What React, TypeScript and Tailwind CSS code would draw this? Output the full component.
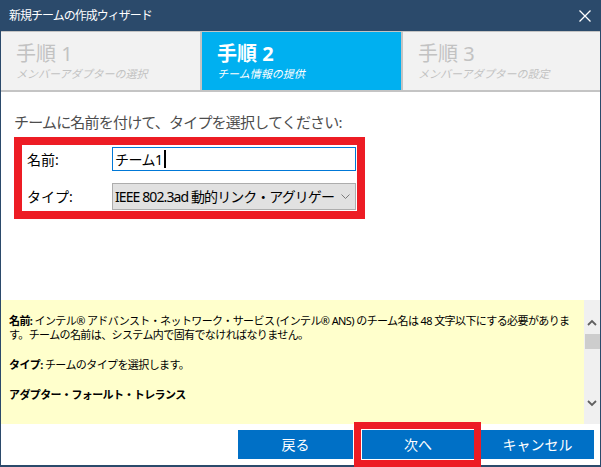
import React from 'react';

const font = { fontFamily: '"Noto Sans", "Noto Sans CJK JP", sans-serif' };

function Step({ num, label, active }: { num: number; label: string; active?: boolean }) {
  return (
    <div
      className={
        active
          ? 'flex flex-col bg-[#00b0f0] pl-[15px] pt-[9px] text-white'
          : 'flex flex-col bg-[#f2f2f2] pl-[15px] pt-[9px] text-[#c2c2c2]'
      }
    >
      <div className={active ? 'text-[20px] leading-[26px] font-bold' : 'text-[20px] leading-[26px]'}>
        手順 {num}
      </div>
      <div className="text-[11px] leading-[14px] italic whitespace-nowrap">{label}</div>
    </div>
  );
}

function Chevron({ up }: { up?: boolean }) {
  return (
    <svg width="10" height="7" viewBox="0 0 10 7" className="block">
      <path
        d={up ? 'M1 6 L5 2 L9 6' : 'M1 1 L5 5 L9 1'}
        fill="none"
        stroke="#606060"
        strokeWidth="1.8"
      />
    </svg>
  );
}

export default function App() {
  return (
    <div
      style={font}
      className="relative flex h-[467px] w-[601px] flex-col border-x border-b-2 border-[#2b4a6b] bg-white"
    >
      {/* title bar */}
      <div className="-mx-px flex h-[31px] shrink-0 items-center justify-between bg-[#2b4a6b] pl-[9px] pr-[10px] text-white">
        <span className="text-[12px] tracking-[-1px]">新規チームの作成ウィザード</span>
        <svg width="12" height="12" viewBox="0 0 12 12">
          <path d="M0.5 0.5 L11.5 11.5 M11.5 0.5 L0.5 11.5" stroke="#ffffff" strokeWidth="1.3" />
        </svg>
      </div>

      {/* steps */}
      <div className="grid h-[61px] shrink-0 grid-cols-[199px_199px_1fr] gap-x-[2px] border-t border-b-2 border-[#c4c4c4] bg-[#c4c4c4]">
        <Step num={1} label="メンバーアダプターの選択" />
        <Step num={2} label="チーム情報の提供" active />
        <Step num={3} label="メンバーアダプターの設定" />
      </div>

      {/* form */}
      <div className="flex flex-1 flex-col px-[13px]">
        <div className="mt-[19px] text-[15px] leading-[22px] tracking-[-0.8px] text-[#4d4d4d] whitespace-nowrap">
          チームに名前を付けて、タイプを選択してください:
        </div>
        <div className="mt-[4px] w-[351px] border-[8px] border-[#ed1c24] pt-[2px] pb-[1px] pr-[1px]">
          <div className="flex items-center">
            <div className="w-[90px] shrink-0 pl-[5px] text-[14px] text-black">名前:</div>
            <div className="flex h-[24px] min-w-0 flex-1 items-center border border-[#0078d7] px-[2px] text-[14px] text-black">
              <span className="tracking-[-0.5px]">チーム1</span>
              <span className="ml-px h-[18px] w-[2px] bg-black" />
            </div>
          </div>
          <div className="mt-[12px] flex items-center">
            <div className="w-[90px] shrink-0 pl-[5px] text-[14px] text-black">タイプ:</div>
            <div className="flex h-[27px] min-w-0 flex-1 items-center overflow-hidden border border-[#adadad] bg-[#e1e1e1] pl-[2px] pr-[5px] text-[14px] text-black">
              <span className="min-w-0 flex-1 whitespace-nowrap tracking-[-0.9px]">
                IEEE 802.3ad 動的リンク・アグリゲー
              </span>
              <svg width="9" height="6" viewBox="0 0 9 6" className="ml-[3px] shrink-0">
                <path d="M0.5 0.5 L4.5 4.5 L8.5 0.5" fill="none" stroke="#7a7a7a" strokeWidth="1" />
              </svg>
            </div>
          </div>
        </div>
      </div>

      {/* help panel */}
      <div className="flex h-[124px] shrink-0">
        <div className="flex-1 bg-[#ffffcc] pl-[8px] pt-[14px] text-[11px] leading-[14px] text-black whitespace-nowrap">
          <div className="tracking-[-0.6px]">
            <b>名前:</b> インテル® アドバンスト・ネットワーク・サービス (インテル® ANS) のチーム名は 48 文字以下にする必要がありま
          </div>
          <div className="tracking-[-0.6px]">す。チームの名前は、システム内で固有でなければなりません。</div>
          <div className="mt-[16px] tracking-[-0.6px]">
            <b>タイプ:</b> チームのタイプを選択します。
          </div>
          <div className="mt-[16px] font-bold tracking-[-0.6px]">アダプター・フォールト・トレランス</div>
        </div>
        <div className="flex w-[16px] flex-col items-center bg-[#f0f0f0] pt-[19px]">
          <Chevron up />
          <div className="mt-[8px] h-[15px] w-[15px] bg-[#cdcdcd]" />
          <div className="flex-1" />
          <div className="mb-[17px]">
            <Chevron />
          </div>
        </div>
      </div>

      {/* footer */}
      <div className="flex h-[41px] shrink-0 items-start justify-end pt-[6px] pr-[6px]">
        <button className="h-[29px] w-[115px] bg-[#0070c6] text-[14px] text-white">戻る</button>
        <div className="relative ml-[9px]">
          <button className="h-[29px] w-[112px] bg-[#0070c6] text-[14px] text-white">次へ</button>
          <div className="absolute -top-[8px] -bottom-[8px] -left-[8px] -right-[7px] border-[7px] border-[#ed1c24]" />
        </div>
        <button className="ml-[7px] h-[29px] w-[113px] bg-[#0070c6] text-[14px] text-white">キャンセル</button>
      </div>
    </div>
  );
}
